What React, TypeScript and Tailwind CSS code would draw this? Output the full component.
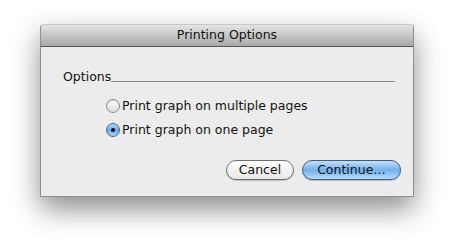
import React from "react";

export default function App() {
  return (
    <div className="w-[453px] h-[251px] bg-white overflow-hidden pt-[24px] pl-[40px]" style={{ fontFamily: '"DejaVu Sans", sans-serif' }}>
      <div className="w-[374px] h-[173px] flex flex-col border border-[#8e8e8e] border-t-[#c8c8c8] bg-[#ececec] rounded-t-[4px] shadow-[0_12px_28px_rgba(0,0,0,0.45)]">
        <div className="h-[22px] flex items-center justify-center rounded-t-[4px] bg-gradient-to-b from-[#e4e4e4] to-[#a9a9a9] border-b border-[#555] text-[12.5px] text-[#111]">
          Printing Options
        </div>
        <div className="flex-1 flex flex-col px-[22px] pt-[22px]">
          <div className="flex items-end">
            <span className="text-[12.5px] text-[#111] leading-[15px]">Options</span>
            <div className="flex-1 h-px bg-[#888] mb-[2px] mr-[-4px]" />
          </div>
          <div className="flex flex-col gap-[9px] mt-[14px] ml-[43px]">
            <label className="flex items-center gap-[2px] text-[12.5px] text-[#111] leading-[15px]">
              <span className="w-[14px] h-[14px] rounded-full border border-[#8a8a8a] bg-gradient-to-b from-[#fdfdfd] to-[#dcdcdc] shadow-[inset_0_1px_1px_rgba(0,0,0,0.15)]" />
              Print graph on multiple pages
            </label>
            <label className="flex items-center gap-[2px] text-[12.5px] text-[#111] leading-[15px]">
              <span className="w-[14px] h-[14px] rounded-full border border-[#44669a] bg-gradient-to-b from-[#bcd9f5] via-[#69a9e6] to-[#a9d3f7] flex items-center justify-center">
                <span className="w-[4px] h-[4px] rounded-full bg-[#111]" />
              </span>
              Print graph on one page
            </label>
          </div>
          <div className="flex justify-end gap-[8px] mt-[23px] mr-[-10px]">
            <button className="w-[68px] h-[20px] rounded-full border border-[#6f6f6f] bg-gradient-to-b from-[#ffffff] to-[#e8e8e8] text-[12.5px] text-[#111] leading-none shadow-[0_1px_1px_rgba(0,0,0,0.2)]">
              Cancel
            </button>
            <button className="w-[99px] h-[20px] rounded-full border border-[#3a5a94] bg-gradient-to-b from-[#c7e0f8] via-[#6fb0ea] to-[#b5dcfa] text-[12.5px] text-[#111] leading-none shadow-[0_1px_1px_rgba(0,0,0,0.2)]">
              Continue…
            </button>
          </div>
        </div>
      </div>
    </div>
  );
}
